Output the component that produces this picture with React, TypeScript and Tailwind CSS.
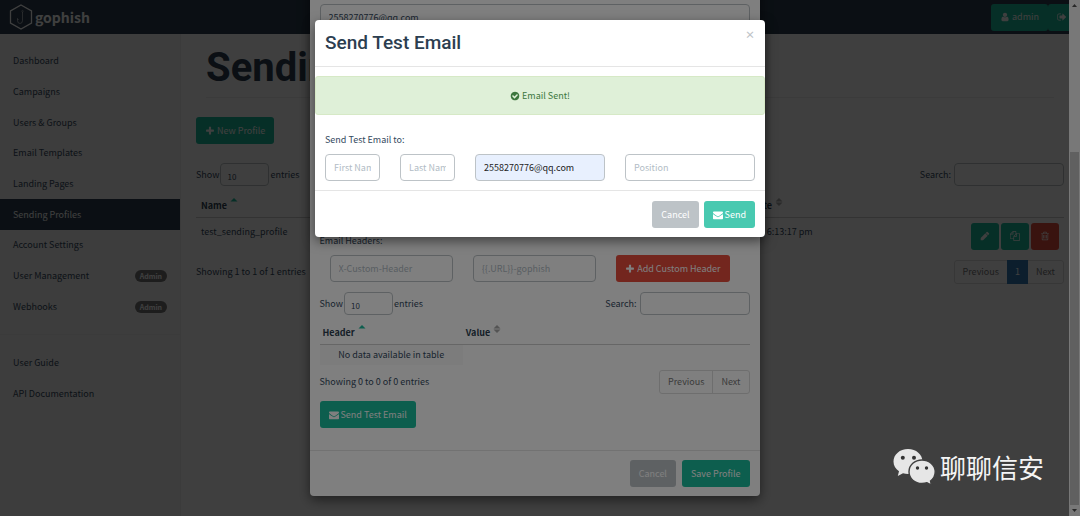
import type { ReactNode } from "react";

const ICONS = {
  plus: "M1600 736v192q0 40-28 68t-68 28h-416v416q0 40-28 68t-68 28h-192q-40 0-68-28t-28-68v-416h-416q-40 0-68-28t-28-68v-192q0-40 28-68t68-28h416v-416q0-40 28-68t68-28h192q40 0 68 28t28 68v416h416q40 0 68 28t28 68z",
  envelope:
    "M1792 710v794q0 66-47 113t-113 47h-1472q-66 0-113-47t-47-113v-794q44 49 101 87 362 246 497 345 57 42 92.5 65.5t94.5 48 110 24.5h2q51 0 110-24.5t94.5-48 92.5-65.5q170-123 498-345 57-39 100-87zm0-294q0 79-49 151t-122 123q-376 261-468 325-10 7-42.5 31t-54 38.8-52 33.2-57.5 27-50 9h-2q-23 0-50-9t-57.5-27-52-33.2-54-38.8-42.5-31q-91-64-262-182.5t-205-142.5q-62-42-117-115.5t-55-136.5q0-78 41.5-130t118.5-52h1472q65 0 112.5 47t47.5 113z",
  pencil: "M960 416l416 416-832 832h-416v-416zM1643 512q0 53-37 90l-166 166-416-416 166-165q36-38 90-38 53 0 91 38l235 234q37 39 37 91z",
  files:
    "M1664 384q40 0 68 28t28 68v1216q0 40-28 68t-68 28h-960q-40 0-68-28t-28-68v-288h-544q-40 0-68-28t-28-68v-672q0-40 20-88t48-76l408-408q28-28 76-48t88-20h416q40 0 68 28t28 68v328q68-40 128-40h416zm-544 213l-299 299h299v-299zm-640-384l-299 299h299v-299zm196 647l316-316v-416h-384v416q0 40-28 68t-68 28h-416v640h512v-256q0-40 20-88t48-76zm956 804v-1152h-384v416q0 40-28 68t-68 28h-416v640h896z",
  trash:
    "M704 736v576q0 14-9 23t-23 9h-64q-14 0-23-9t-9-23v-576q0-14 9-23t23-9h64q14 0 23 9t9 23zm256 0v576q0 14-9 23t-23 9h-64q-14 0-23-9t-9-23v-576q0-14 9-23t23-9h64q14 0 23 9t9 23zm256 0v576q0 14-9 23t-23 9h-64q-14 0-23-9t-9-23v-576q0-14 9-23t23-9h64q14 0 23 9t9 23zm128 724v-948h-896v948q0 22 7 40.5t14.5 27 10.5 8.5h832q3 0 10.5-8.5t14.5-27 7-40.5zm-672-1076h448l-48-117q-7-9-17-11h-317q-10 2-17 11zm928 32v64q0 14-9 23t-23 9h-96v948q0 83-47 143.5t-113 60.5h-832q-66 0-113-58.5t-47-141.5v-952h-96q-14 0-23-9t-9-23v-64q0-14 9-23t23-9h309l70-167q15-37 54-63t79-26h320q40 0 79 26t54 63l70 167h309q14 0 23 9t9 23z",
  user: "M1536 1399q0 109-62.5 187t-150.5 78h-854q-88 0-150.5-78t-62.5-187q0-85 8.5-160.5t31.5-152 58.5-131 94-89 134.5-34.5q131 128 313 128t313-128q76 0 134.5 34.5t94 89 58.5 131 31.5 152 8.5 160.5zm-256-887q0 159-112.5 271.5t-271.5 112.5-271.5-112.5-112.5-271.5 112.5-271.5 271.5-112.5 271.5 112.5 112.5 271.5z",
  signOut:
    "M704 1440q0 4 1 20t.5 26.5-3 23.5-10 19.5-20.5 6.5h-320q-119 0-203.5-84.5t-84.5-203.5v-704q0-119 84.5-203.5t203.5-84.5h320q13 0 22.5 9.5t9.5 22.5q0 4 1 20t.5 26.5-3 23.5-10 19.5-20.5 6.5h-320q-66 0-113 47t-47 113v704q0 66 47 113t113 47h312l11.5 1 11.5 3 8 5.5 7 9 2 13.5zm928-544q0 26-19 45l-544 544q-19 19-45 19t-45-19-19-45v-288h-448q-26 0-45-19t-19-45v-384q0-26 19-45t45-19h448v-288q0-26 19-45t45-19 45 19l544 544q19 19 19 45z",
  check:
    "M1412 734q0-28-18-46l-91-90q-19-19-45-19t-45 19l-408 407-226-226q-19-19-45-19t-45 19l-91 90q-18 18-18 46 0 27 18 45l362 362q19 19 45 19 27 0 46-19l543-543q18-18 18-45zm252 162q0 209-103 385.5t-279.5 279.5-385.5 103-385.5-103-279.5-279.5-103-385.5 103-385.5 279.5-279.5 385.5-103 385.5 103 279.5 279.5 103 385.5z",
};

const NAV = [
  { label: "Dashboard" },
  { label: "Campaigns" },
  { label: "Users & Groups" },
  { label: "Email Templates" },
  { label: "Landing Pages" },
  { label: "Sending Profiles", active: true },
  { label: "Account Settings" },
  { label: "User Management", admin: true },
  { label: "Webhooks", admin: true },
];

function Icon({ name }: { name: keyof typeof ICONS }) {
  return (
    <svg viewBox="0 0 1792 1792" className="size-[10px] shrink-0" fill="currentColor" aria-hidden="true">
      <path d={ICONS[name]} />
    </svg>
  );
}

function SortIcon({ active }: { active?: boolean }) {
  return (
    <svg viewBox="0 0 8 10" className="mb-2 h-[10px] w-2 shrink-0" aria-hidden="true">
      <path d="M0.500 4.500L4 1L7.500 4.500Z" fill={active ? "#1abc9c" : "#a8a8a8"} />
      {!active && <path d="M0.500 5.500L4 9L7.500 5.500Z" fill="#a8a8a8" />}
    </svg>
  );
}

const tones = {
  teal: "bg-[#1abc9c]",
  mint: "bg-[#48c9b0]",
  gray: "bg-[#bdc3c7]",
  red: "bg-[#e74c3c]",
};

function Button({
  tone,
  label,
  children,
}: {
  tone: keyof typeof tones;
  label?: string;
  children: ReactNode;
}) {
  return (
    <button
      type="button"
      aria-label={label}
      className={`flex h-[27px] items-center gap-[2px] rounded-[3px] px-[9px] whitespace-nowrap text-white ${tones[tone]}`}
    >
      {children}
    </button>
  );
}

const field =
  "h-[27px] w-full min-w-0 rounded-[4px] border border-[#bdc3c7] bg-white px-2 text-[#34495e] placeholder:text-[#b2bcc5]";

function TableControls({ id }: { id: string }) {
  return (
    <div className="flex items-center justify-between">
      <label htmlFor={`${id}-length`} className="flex items-center gap-px">
        Show
        <select
          id={`${id}-length`}
          className="h-[23px] w-[49px] appearance-none rounded-[4px] border border-[#bdc3c7] bg-white px-[6px] pt-[5px] text-[8px]"
        >
          <option>10</option>
        </select>
        entries
      </label>
      <label htmlFor={`${id}-search`} className="flex items-center gap-[3px]">
        Search:
        <input
          id={`${id}-search`}
          type="search"
          className="h-[23px] w-[110px] rounded-[4px] border border-[#bdc3c7] bg-white px-2"
        />
      </label>
    </div>
  );
}

function Pagination({ page }: { page?: number }) {
  return (
    <div className="flex h-6 items-stretch rounded-[3px] border border-[#dddddd] text-[#777777]">
      <button type="button" className="px-2">
        Previous
      </button>
      {page ? (
        <button type="button" className="-my-px bg-[#337ab7] px-2 text-white">
          {page}
        </button>
      ) : (
        <span className="w-px bg-[#dddddd]" />
      )}
      <button type="button" className="px-2">
        Next
      </button>
    </div>
  );
}

function Navbar() {
  return (
    <header className="flex h-[34px] items-center justify-between bg-[#2c3e50] pr-1 pl-[9px]">
      <a href="#" className="flex items-center gap-[2px] text-[14px] leading-5 font-bold text-white">
        <svg viewBox="0 0 24 26" className="h-[26px] w-6" fill="none" stroke="currentColor" aria-hidden="true">
          <path d="M12 1L22.500 7V19L12 25L1.500 19V7Z" strokeWidth="1.300" />
          <path d="M13.500 8V16.500Q13.500 19.500 11 19.500Q8.500 19.500 8.500 16.500V14.500L9.500 16" strokeWidth="0.900" opacity="0.600" />
          <circle cx="13.500" cy="7.200" r="0.800" strokeWidth="0.600" opacity="0.600" />
        </svg>
        gophish
      </a>
      <div className="flex">
        <Button tone="teal">
          <Icon name="user" />
          admin
        </Button>
        <Button tone="teal" label="Log out">
          <Icon name="signOut" />
        </Button>
      </div>
    </header>
  );
}

function Sidebar() {
  return (
    <nav className="w-[181px] shrink-0 border-r border-[#eeeeee] bg-[#f5f5f5] pt-3 text-[#34495e]">
      <ul className="grid h-[276px] auto-rows-fr">
        {NAV.map((item) => (
          <li key={item.label} className="grid">
            <a
              href="#"
              className={`flex items-center justify-between px-[13px] ${
                item.active ? "bg-[#2c3e50] text-white" : ""
              }`}
            >
              {item.label}
              {item.admin && (
                <span className="rounded-full bg-[#777777] px-[5px] text-[7px] leading-3 font-bold text-white">
                  Admin
                </span>
              )}
            </a>
          </li>
        ))}
      </ul>
      <hr className="my-3 border-[#eeeeee]" />
      <a href="#" className="flex h-[31px] items-center pl-[13px]">
        User Guide
      </a>
      <a href="#" className="flex h-[31px] items-center pl-[13px]">
        API Documentation
      </a>
    </nav>
  );
}

function ProfilesPage() {
  return (
    <main className="min-w-0 flex-1 pr-4 pl-[15px]">
      <h1 className="mx-[10px] border-b border-[#eeeeee] pt-3 pb-[7px] font-[Roboto,sans-serif] text-[40px] leading-[44px] font-bold text-[#2c3e50]">
        Sending Profiles
      </h1>
      <div className="mt-[19px] mb-[19px] flex">
        <Button tone="teal">
          <Icon name="plus" />
          New Profile
        </Button>
      </div>
      <TableControls id="profiles" />
      <table className="mt-2 w-full table-fixed text-left">
        <thead className="border-b border-[#cccccc] text-[#2c3e50]">
          <tr className="h-[23px]">
            <th className="px-[5px] pt-px">
              <span className="flex items-center gap-[3px]">
                Name
                <SortIcon active />
              </span>
            </th>
            <th className="w-[251px] px-[5px] pt-px">
              <span className="flex items-center gap-[3px]">
                Last Modified Date
                <SortIcon />
              </span>
            </th>
            <th className="w-[128px]" />
          </tr>
        </thead>
        <tbody>
          <tr className="align-top">
            <td className="px-[5px] pt-[7px]">test_sending_profile</td>
            <td className="px-[5px] pt-[7px]">January 5th 2022, 6:13:17 pm</td>
            <td className="p-[5px]">
              <div className="flex justify-end gap-[2px]">
                <Button tone="teal" label="Edit">
                  <Icon name="pencil" />
                </Button>
                <Button tone="teal" label="Copy">
                  <Icon name="files" />
                </Button>
                <Button tone="red" label="Delete">
                  <Icon name="trash" />
                </Button>
              </div>
            </td>
          </tr>
        </tbody>
      </table>
      <div className="mt-[5px] flex items-center justify-between">
        <span>Showing 1 to 1 of 1 entries</span>
        <Pagination page={1} />
      </div>
    </main>
  );
}

function ProfileModal() {
  return (
    <div
      role="dialog"
      aria-label="Sending profile"
      className="w-full max-w-[450px] rounded-[4px] bg-white pt-20 text-[#34495e] shadow-[0_4px_12px_rgba(0,0,0,0.5)]"
    >
      <div className="px-[10px]">
        <input aria-label="Username" className={field} defaultValue="2558270776@qq.com" />
        <div className="mt-[203px]">Email Headers:</div>
        <div className="mt-[7px] mb-[10px] grid grid-cols-3">
          <div className="px-[10px]">
            <input aria-label="Header name" className={field} placeholder="X-Custom-Header" />
          </div>
          <div className="px-[10px]">
            <input aria-label="Header value" className={field} placeholder="{{.URL}}-gophish" />
          </div>
          <div className="flex px-[10px]">
            <Button tone="red">
              <Icon name="plus" />
              Add Custom Header
            </Button>
          </div>
        </div>
        <TableControls id="headers" />
        <table className="mt-[6px] w-full table-fixed text-left">
          <thead className="border-b border-[#cccccc] text-[#2c3e50]">
            <tr className="h-[23px]">
              <th className="w-1/3 px-[3px] pt-[2px]">
                <span className="flex items-center gap-[3px]">
                  Header
                  <SortIcon active />
                </span>
              </th>
              <th className="px-[3px] pt-[2px]">
                <span className="flex items-center gap-[3px]">
                  Value
                  <SortIcon />
                </span>
              </th>
            </tr>
          </thead>
          <tbody>
            <tr className="h-[21px]">
              <td className="bg-[#f9f9f9] text-center">No data available in table</td>
            </tr>
          </tbody>
        </table>
        <div className="mt-[5px] mb-[7px] flex items-center justify-between">
          <span>Showing 0 to 0 of 0 entries</span>
          <Pagination />
        </div>
        <div className="flex">
          <Button tone="teal">
            <Icon name="envelope" />
            Send Test Email
          </Button>
        </div>
      </div>
      <div className="mt-[22px] flex justify-end gap-[6px] border-t border-[#e5e5e5] px-[10px] py-[9px]">
        <Button tone="gray">Cancel</Button>
        <Button tone="teal">Save Profile</Button>
      </div>
    </div>
  );
}

function TestEmailModal() {
  return (
    <div
      role="dialog"
      aria-labelledby="test-email-title"
      className="w-full max-w-[450px] rounded-[4px] bg-white text-[#34495e] shadow-[0_4px_12px_rgba(0,0,0,0.5)]"
    >
      <div className="flex items-start justify-between border-b border-[#e5e5e5] p-[10px]">
        <h4
          id="test-email-title"
          className="font-[Roboto,sans-serif] text-[19px] leading-[26px] font-medium text-[#2c3e50]"
        >
          Send Test Email
        </h4>
        <button type="button" aria-label="Close" className="text-[10px] leading-[10px] font-bold text-[#bdc3c7]">
          ×
        </button>
      </div>
      <div
        role="status"
        className="mt-[9px] flex h-[39px] items-center justify-center gap-[2px] rounded-[3px] border border-[#d6e9c6] bg-[#dff0d8] text-[#3c763d]"
      >
        <Icon name="check" />
        Email Sent!
      </div>
      <div className="mt-[18px] px-[10px]">Send Test Email to:</div>
      <div className="mt-[7px] grid grid-cols-12">
        <div className="col-span-2 px-[10px]">
          <input aria-label="First Name" className={field} placeholder="First Name" />
        </div>
        <div className="col-span-2 px-[10px]">
          <input aria-label="Last Name" className={field} placeholder="Last Name" />
        </div>
        <div className="col-span-4 px-[10px]">
          <input
            aria-label="Email"
            className="h-[27px] w-full min-w-0 rounded-[4px] border border-[#bdc3c7] bg-[#e8f0fe] px-2 text-[#222222]"
            defaultValue="2558270776@qq.com"
          />
        </div>
        <div className="col-span-4 px-[10px]">
          <input aria-label="Position" className={field} placeholder="Position" />
        </div>
      </div>
      <div className="mt-[9px] flex justify-end gap-[5px] border-t border-[#e5e5e5] px-[10px] pt-[10px] pb-[9px]">
        <Button tone="gray">Cancel</Button>
        <Button tone="mint">
          <Icon name="envelope" />
          Send
        </Button>
      </div>
    </div>
  );
}

function Scrollbar() {
  return (
    <div className="flex w-[11px] shrink-0 flex-col items-center bg-[#f1f1f1]" aria-hidden="true">
      <svg viewBox="0 0 11 11" className="size-[11px]">
        <path d="M3 7L5.500 4L8 7Z" fill="#505050" />
      </svg>
      <div className="flex-[2]" />
      <div className="w-[9px] flex-[5] bg-[#c1c1c1]" />
      <svg viewBox="0 0 11 11" className="size-[11px]">
        <path d="M3 4L5.500 7L8 4Z" fill="#505050" />
      </svg>
    </div>
  );
}

function Watermark() {
  return (
    <div className="absolute right-9 bottom-[30px] flex items-center gap-1 text-[26px] leading-[38px] text-[#f5f5f5]">
      <svg viewBox="0 0 43 38" className="h-[38px] w-[43px]" aria-hidden="true">
        <path
          d="M15 1C6.800 1 0.500 6.500 0.500 13.500C0.500 17.500 2.500 21 6 23.300L4.800 28L10 25.300C11.600 25.800 13.300 26 15 26C23.200 26 29.500 20.500 29.500 13.500S23.200 1 15 1Z"
          fill="#e6e6e6"
        />
        <path
          d="M29 12C21.800 12 16 17 16 23.800S21.800 35.500 29 35.500C30.800 35.500 32.500 35.200 34 34.700L38.500 37L37.500 33C40.500 30.800 42.200 27.500 42.200 23.800C42.200 17 36.200 12 29 12Z"
          fill="#e6e6e6"
          stroke="#404040"
          strokeWidth="1.400"
        />
        <g fill="#333333">
          <circle cx="9.800" cy="9.800" r="2" />
          <circle cx="21" cy="9.800" r="2" />
          <circle cx="24.500" cy="20" r="1.700" />
          <circle cx="33.500" cy="20" r="1.700" />
        </g>
      </svg>
      聊聊信安
    </div>
  );
}

export default function App() {
  return (
    <div className="relative flex h-screen flex-col overflow-hidden bg-white font-['Noto_Sans_CJK_SC',sans-serif] text-[9px] leading-[14px] text-[#34495e]">
      <Navbar />
      <div className="flex flex-1">
        <Sidebar />
        <ProfilesPage />
      </div>

      <div className="absolute inset-0 flex bg-black/50">
        <div className="flex min-w-0 flex-1 items-end justify-center pb-5">
          <ProfileModal />
        </div>
        <Scrollbar />
      </div>

      <div className="absolute inset-0 flex items-start justify-center bg-black/50 pt-5">
        <TestEmailModal />
      </div>

      <Watermark />
    </div>
  );
}
